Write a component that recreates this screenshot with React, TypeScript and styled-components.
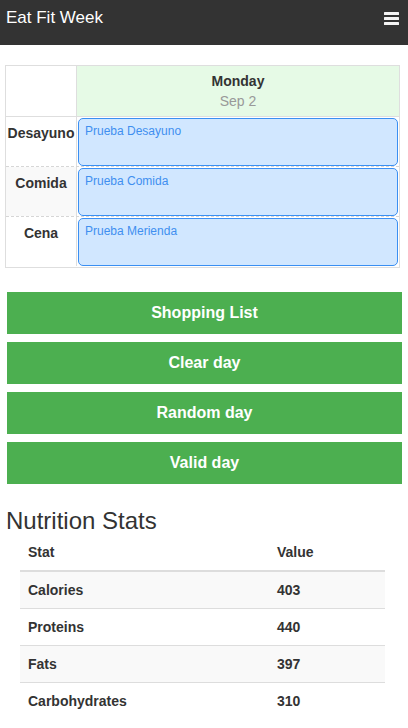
import React from "react";
import styled, { createGlobalStyle } from "styled-components";

const GlobalStyle = createGlobalStyle`
  *, *::before, *::after { box-sizing: border-box; }
  html, body { margin: 0; padding: 0; background: #fff; }
  body {
    font-family: "Liberation Sans", Arial, Helvetica, sans-serif;
    color: #333;
    font-size: 14px;
  }
`;

const TopBar = styled.header`
  height: 45px;
  background: #333;
  display: flex;
  justify-content: space-between;
  align-items: flex-start;
  padding: 8px 9px 0 6px;
`;

const Brand = styled.div`
  color: #fff;
  font-size: 17px;
  line-height: 20px;
`;

const MenuIcon = styled.div`
  width: 15px;
  margin-top: 4px;
  display: flex;
  flex-direction: column;
  gap: 2px;
`;

const MenuBar = styled.span`
  display: block;
  height: 3px;
  background: #f4f4f4;
  border-radius: 0.5px;
`;

const Page = styled.main`
  padding-top: 20px;
`;

const Schedule = styled.section`
  margin-left: 5px;
  width: 395px;
  border: 1px solid #dedede;
`;

const ScheduleRow = styled.div<{ $head?: boolean; $last?: boolean }>`
  display: grid;
  grid-template-columns: 71px 1fr;
  border-bottom: 1px ${(p) => (p.$head ? "solid #dedede" : p.$last ? "solid transparent" : "dashed #d6d6d6")};
`;

const SideCell = styled.div<{ $striped?: boolean }>`
  border-right: 1px solid #dedede;
  background: ${(p) => (p.$striped ? "#f9f9f9" : "#fff")};
  text-align: center;
  padding-top: 6px;
  font-weight: bold;
  font-size: 14px;
  line-height: 20px;
  color: #333;
`;

const DayHeader = styled.div`
  background: #e6fae6;
  text-align: center;
  padding: 5px;
  line-height: 20px;
  font-size: 14px;
`;

const DayName = styled.div`
  font-weight: bold;
  color: #333;
`;

const DayDate = styled.div`
  color: #999;
`;

const MealCell = styled.div`
  padding: 1px 1px 0 1px;
`;

const MealCard = styled.div`
  height: 48px;
  border: 1px solid #3a8ff2;
  border-radius: 5px;
  background: #d1e7ff;
  padding: 5px 6px;
  font-size: 12px;
  line-height: 14px;
  color: #3f8ff0;
`;

const ActionList = styled.div`
  margin: 24px 0 0 7px;
  width: 395px;
  display: flex;
  flex-direction: column;
  gap: 8px;
`;

const ActionButton = styled.button`
  height: 42px;
  border: none;
  background: #4caf50;
  color: #fff;
  font-family: inherit;
  font-weight: bold;
  font-size: 16px;
  padding: 0;
  cursor: pointer;
`;

const SectionTitle = styled.h2`
  margin: 24px 0 0 6px;
  font-size: 24px;
  font-weight: normal;
  line-height: 26.4px;
  color: #333;
`;

const StatsTable = styled.table`
  margin-left: 20px;
  width: 365px;
  border-collapse: collapse;
  table-layout: fixed;
  font-size: 14px;
  line-height: 20px;
  color: #333;
`;

const StatHead = styled.th<{ $first?: boolean }>`
  text-align: left;
  padding: 8px;
  font-weight: bold;
  border-bottom: 2px solid #dddddd;
  width: ${(p) => (p.$first ? "249px" : "auto")};
`;

const StatRow = styled.tr<{ $striped?: boolean }>`
  background: ${(p) => (p.$striped ? "#f9f9f9" : "#fff")};
`;

const StatCell = styled.td`
  padding: 8px;
  font-weight: bold;
  border-top: 1px solid #dddddd;
`;

const meals = [
  { label: "Desayuno", text: "Prueba Desayuno" },
  { label: "Comida", text: "Prueba Comida" },
  { label: "Cena", text: "Prueba Merienda" },
];

const actions = ["Shopping List", "Clear day", "Random day", "Valid day"];

const stats = [
  { name: "Calories", value: 403 },
  { name: "Proteins", value: 440 },
  { name: "Fats", value: 397 },
  { name: "Carbohydrates", value: 310 },
];

export default function App() {
  return (
    <>
      <GlobalStyle />
      <TopBar>
        <Brand>Eat Fit Week</Brand>
        <MenuIcon aria-label="menu">
          <MenuBar />
          <MenuBar />
          <MenuBar />
        </MenuIcon>
      </TopBar>
      <Page>
        <Schedule>
          <ScheduleRow $head>
            <SideCell />
            <DayHeader>
              <DayName>Monday</DayName>
              <DayDate>Sep 2</DayDate>
            </DayHeader>
          </ScheduleRow>
          {meals.map((m, i) => (
            <ScheduleRow key={m.label} $last={i === meals.length - 1}>
              <SideCell $striped={i % 2 === 1}>{m.label}</SideCell>
              <MealCell>
                <MealCard>{m.text}</MealCard>
              </MealCell>
            </ScheduleRow>
          ))}
        </Schedule>
        <ActionList>
          {actions.map((a) => (
            <ActionButton key={a}>{a}</ActionButton>
          ))}
        </ActionList>
        <SectionTitle>Nutrition Stats</SectionTitle>
        <StatsTable>
          <thead>
            <tr>
              <StatHead $first>Stat</StatHead>
              <StatHead>Value</StatHead>
            </tr>
          </thead>
          <tbody>
            {stats.map((s, i) => (
              <StatRow key={s.name} $striped={i % 2 === 0}>
                <StatCell>{s.name}</StatCell>
                <StatCell>{s.value}</StatCell>
              </StatRow>
            ))}
          </tbody>
        </StatsTable>
      </Page>
    </>
  );
}
